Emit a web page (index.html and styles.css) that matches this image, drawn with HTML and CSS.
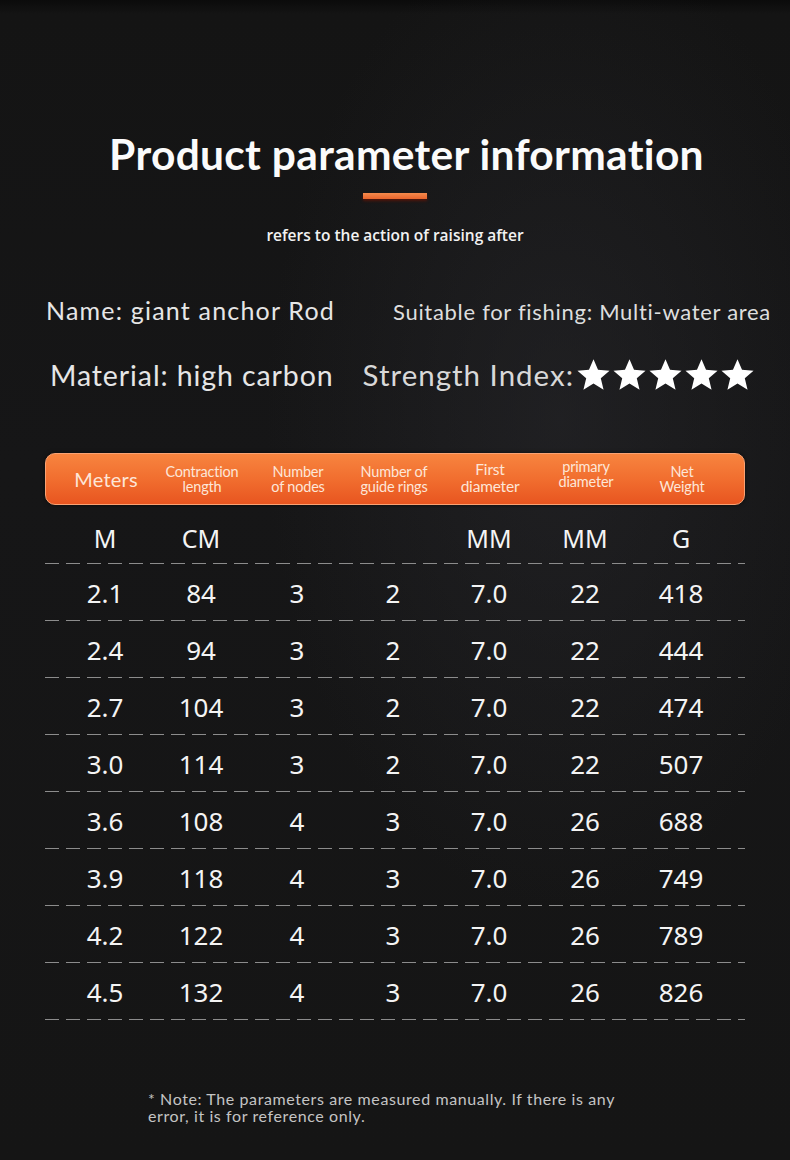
FILE: index.html
```html
<!DOCTYPE html>
<html>
<head>
<meta charset="utf-8">
<link rel="stylesheet" href="styles.css">
</head>
<body>
<div class="page">
  <h1 class="title">Product parameter information</h1>
  <div class="accent"></div>
  <p class="subtitle">refers to the action of raising after</p>

  <div class="info">
    <div class="info-row row1">
      <span class="name">Name: giant anchor Rod</span>
      <span class="suit">Suitable for fishing: Multi-water area</span>
    </div>
    <div class="info-row row2">
      <span class="mat">Material: high carbon</span>
      <span class="strength">Strength Index:<span class="stars">
        <svg viewBox="0 0 24 24"><path d="M12 1.5l3.1 7.3 7.9.6-6 5.2 1.9 7.8L12 18.2l-6.9 4.2L7 14.6 1 9.4l7.9-.6z"/></svg>
        <svg viewBox="0 0 24 24"><path d="M12 1.5l3.1 7.3 7.9.6-6 5.2 1.9 7.8L12 18.2l-6.9 4.2L7 14.6 1 9.4l7.9-.6z"/></svg>
        <svg viewBox="0 0 24 24"><path d="M12 1.5l3.1 7.3 7.9.6-6 5.2 1.9 7.8L12 18.2l-6.9 4.2L7 14.6 1 9.4l7.9-.6z"/></svg>
        <svg viewBox="0 0 24 24"><path d="M12 1.5l3.1 7.3 7.9.6-6 5.2 1.9 7.8L12 18.2l-6.9 4.2L7 14.6 1 9.4l7.9-.6z"/></svg>
        <svg viewBox="0 0 24 24"><path d="M12 1.5l3.1 7.3 7.9.6-6 5.2 1.9 7.8L12 18.2l-6.9 4.2L7 14.6 1 9.4l7.9-.6z"/></svg>
      </span></span>
    </div>
  </div>

  <div class="table">
    <div class="thead">
      <div class="th big">Meters</div>
      <div class="th">Contraction<br>length</div>
      <div class="th">Number<br>of nodes</div>
      <div class="th">Number of<br>guide rings</div>
      <div class="th first">First<br>diameter</div>
      <div class="th up">primary<br>diameter</div>
      <div class="th">Net<br>Weight</div>
    </div>
    <div class="tr units"><span>M</span><span>CM</span><span></span><span></span><span>MM</span><span>MM</span><span>G</span></div>
    <div class="tr"><span>2.1</span><span>84</span><span>3</span><span>2</span><span>7.0</span><span>22</span><span>418</span></div>
    <div class="tr"><span>2.4</span><span>94</span><span>3</span><span>2</span><span>7.0</span><span>22</span><span>444</span></div>
    <div class="tr"><span>2.7</span><span>104</span><span>3</span><span>2</span><span>7.0</span><span>22</span><span>474</span></div>
    <div class="tr"><span>3.0</span><span>114</span><span>3</span><span>2</span><span>7.0</span><span>22</span><span>507</span></div>
    <div class="tr"><span>3.6</span><span>108</span><span>4</span><span>3</span><span>7.0</span><span>26</span><span>688</span></div>
    <div class="tr"><span>3.9</span><span>118</span><span>4</span><span>3</span><span>7.0</span><span>26</span><span>749</span></div>
    <div class="tr"><span>4.2</span><span>122</span><span>4</span><span>3</span><span>7.0</span><span>26</span><span>789</span></div>
    <div class="tr"><span>4.5</span><span>132</span><span>4</span><span>3</span><span>7.0</span><span>26</span><span>826</span></div>
  </div>

  <p class="note">* Note: The parameters are measured manually. If there is any<br>error, it is for reference only.</p>
</div>
</body>
</html>
```

FILE: styles.css
```css
* { box-sizing: border-box; }
html, body { margin: 0; padding: 0; }
body { background: #121212; }
.page {
  width: 790px;
  height: 1160px;
  overflow: hidden;
  background:
    radial-gradient(ellipse 420px 700px at 560px 420px, rgba(40,40,44,0.55), rgba(40,40,44,0) 70%),
    linear-gradient(180deg, #0b0b0b 0px, #141414 14px, #161617 40%, #151515 100%);
  color: #fff;
  display: flex;
  flex-direction: column;
  align-items: center;
  padding-top: 128px;
}
.title {
  margin: 0 0 0 23px;
  font-family: Lato, "Noto Sans", sans-serif;
  font-weight: 700;
  font-size: 42.5px;
  line-height: 52px;
  color: #fbfbfb;
  letter-spacing: 0.3px;
}
.accent {
  width: 64px;
  height: 6px;
  margin-top: 13px;
  background: linear-gradient(180deg, #f58a4c, #e8642c);
  box-shadow: 0 2px 3px rgba(120,20,0,0.6);
}
.subtitle {
  margin: 24px 0 0;
  font-family: "Open Sans", "Noto Sans", sans-serif;
  font-weight: 600;
  font-size: 15.5px;
  line-height: 24px;
  color: #f2f2f2;
}
.info {
  width: 790px;
  margin-top: 48px;
  font-family: Lato, "Noto Sans", sans-serif;
  color: #e6e6e6;
}
.info-row { display: flex; align-items: baseline; }
.row1 { height: 32px; }
.row2 { margin-top: 30px; height: 40px; }
.name { margin-left: 46px; font-size: 25px; letter-spacing: 1.2px; }
.suit { margin-left: auto; margin-right: 19px; font-size: 22px; letter-spacing: 0.7px; color: #dedede; }
.mat { margin-left: 50px; font-size: 28.5px; letter-spacing: 0.9px; }
.strength { margin-left: 29px; font-size: 29.5px; letter-spacing: 1px; color: #d8d8d8; display: inline-flex; align-items: baseline; }
.stars { display: inline-flex; gap: 1px; margin-left: 2px; align-self: center; }
.stars svg { width: 35px; height: 35px; fill: #fff; }

.table {
  width: 700px;
  margin-top: 56px;
}
.thead {
  height: 52px;
  border-radius: 10px;
  background: linear-gradient(180deg, #f7843f 0%, #f16e2f 50%, #e85520 100%);
  border: 1px solid #f9a273;
  box-shadow: 0 0 4px rgba(0,0,0,0.6);
  display: grid;
  grid-template-columns: repeat(7, 96px);
  padding-left: 12px;
  align-items: center;
}
.th {
  text-align: center;
  font-family: Lato, "Noto Sans", sans-serif;
  font-size: 14.5px;
  line-height: 15px;
  color: #fde6d8;
  letter-spacing: -0.2px;
}
.th.big { font-size: 20px; line-height: 22px; letter-spacing: 0.2px; }
.th.first { font-size: 15.5px; line-height: 17px; margin-top: -2px; }
.th.up { margin-top: -10px; }
.tr {
  display: grid;
  grid-template-columns: repeat(7, 96px);
  padding-left: 12px;
  height: 57px;
  align-items: center;
  font-family: "Noto Sans", "Open Sans", sans-serif;
  font-size: 26px;
  color: #f4f4f4;
  background: repeating-linear-gradient(90deg, #8c8c8c 0 14px, transparent 14px 21px) bottom left / 100% 1px no-repeat;
}
.tr span { text-align: center; }
.tr.units { height: 59px; padding-top: 6px; font-size: 25px; }
.note {
  margin: 70px 0 0;
  width: 790px;
  padding-left: 148px;
  font-family: Lato, "Noto Sans", sans-serif;
  font-size: 16px;
  line-height: 17px;
  letter-spacing: 0.6px;
  color: #c4c4c4;
}
```
